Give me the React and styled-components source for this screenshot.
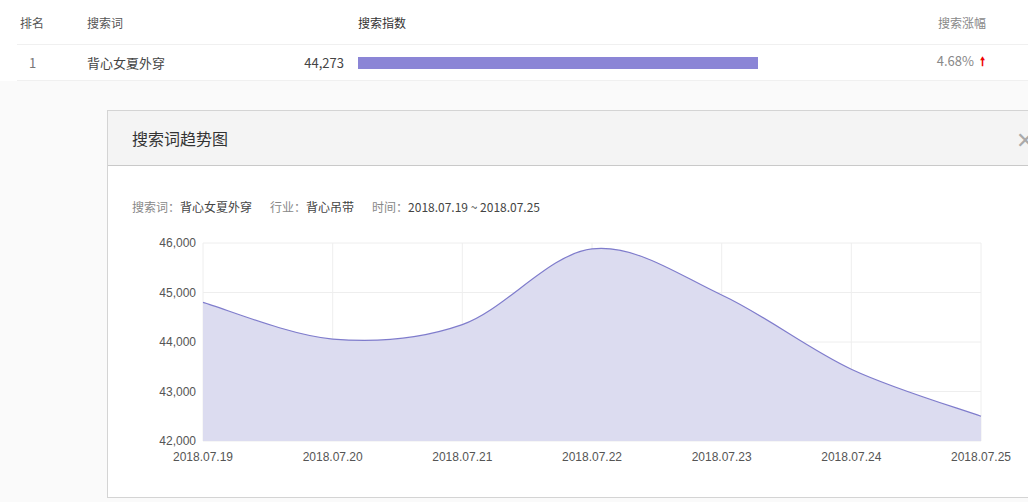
import React from 'react';
import styled, { createGlobalStyle } from 'styled-components';

const Global = createGlobalStyle`
  *, *::before, *::after { box-sizing: border-box; }
  html, body { margin: 0; background: #fafafa; overflow: hidden; }
  body { font-family: "Microsoft YaHei", "Noto Sans CJK SC", "Liberation Sans", sans-serif; }
`;

const Table = styled.div`
  background: #fff;
  padding: 0 0 0 17px;
`;

const Row = styled.div`
  display: flex;
  align-items: center;
  height: ${p => p.$h}px;
  border-bottom: 1px solid #f0f0f0;
  font-size: ${p => (p.$head ? 12 : 13)}px;
  color: ${p => (p.$head ? '#555' : '#444')};
`;

const Cell = styled.div`
  width: ${p => p.$w}px;
  flex: none;
  text-align: ${p => p.$align || 'left'};
  color: ${p => p.$color || 'inherit'};
  padding-left: ${p => p.$pl || 0}px;
`;

const Bar = styled.div`
  width: 400px;
  height: 12px;
  background: #8b85d6;
  margin-left: 14px;
`;

const Up = styled.span`
  color: #e00;
  font-weight: bold;
  margin-left: 6px;
  font-size: 12px;
`;

const Modal = styled.div`
  margin: 29px 0 0 107px;
  border: 1px solid #d4d4d4;
  border-right: none;
  background: #fff;
  height: 388px;
`;

const ModalHead = styled.div`
  height: 55px;
  background: #f4f4f4;
  border-bottom: 1px solid #c9c9c9;
  display: flex;
  align-items: center;
  justify-content: space-between;
  padding-left: 24px;
  font-size: 16px;
  color: #333;
`;

const Close = styled.span`
  color: #aaa;
  font-size: 22px;
  font-weight: 300;
  margin-right: -6px;
`;

const Meta = styled.div`
  padding: 32px 0 0 24px;
  font-size: 12px;
  color: #888;
  display: flex;
  gap: 18px;
  b { font-weight: normal; color: #444; }
`;

const ChartWrap = styled.div`
  margin-top: 12px;
`;

const xs = [202, 331.7, 461.3, 591, 720.7, 850.3, 980];
const vals = [44800, 44060, 44350, 45880, 44950, 43450, 42500];
const yOf = v => 246 + (46000 - v) * 0.0495;
const dates = ['2018.07.19', '2018.07.20', '2018.07.21', '2018.07.22', '2018.07.23', '2018.07.24', '2018.07.25'];

function smooth(pts) {
  let d = `M${pts[0][0]},${pts[0][1]}`;
  for (let i = 0; i < pts.length - 1; i++) {
    const p0 = pts[i - 1] || pts[i], p1 = pts[i], p2 = pts[i + 1], p3 = pts[i + 2] || p2;
    const c1 = [p1[0] + (p2[0] - p0[0]) / 6, p1[1] + (p2[1] - p0[1]) / 6];
    const c2 = [p2[0] - (p3[0] - p1[0]) / 6, p2[1] - (p3[1] - p1[1]) / 6];
    d += ` C${c1[0]},${c1[1]} ${c2[0]},${c2[1]} ${p2[0]},${p2[1]}`;
  }
  return d;
}

function Chart() {
  const pts = xs.map((x, i) => [x, yOf(vals[i])]);
  const line = smooth(pts);
  return (
    <svg width="921" height="240" viewBox="107 230 921 240" style={{ display: 'block' }}>
      {[42000, 43000, 44000, 45000, 46000].map(v => (
        <g key={v}>
          <line x1="202" x2="980" y1={yOf(v)} y2={yOf(v)} stroke="#eee" />
          <text x="195" y={yOf(v) + 4} fontSize="12" fill="#555" textAnchor="end" fontFamily="Liberation Sans, sans-serif">{v.toLocaleString('en-US')}</text>
        </g>
      ))}
      {xs.map((x, i) => (
        <g key={x}>
          <line x1={x} x2={x} y1="246" y2="444" stroke="#eee" />
          <text x={x} y="464" fontSize="12" fill="#555" textAnchor="middle" fontFamily="Liberation Sans, sans-serif">{dates[i]}</text>
        </g>
      ))}
      <path d={`${line} L980,444 L202,444 Z`} fill="#dcdcf0" />
      <path d={line} fill="none" stroke="#7f7ccc" strokeWidth="1.2" />
    </svg>
  );
}

export default function App() {
  return (
    <>
      <Global />
      <Table>
        <Row $h={45} $head>
          <Cell $w={70} $pl={3}>排名</Cell>
          <Cell $w={270}>搜索词</Cell>
          <Cell $w={562} $pl={1} $color="#333">搜索指数</Cell>
          <Cell $w={67} $align="right" $color="#888">搜索涨幅</Cell>
        </Row>
        <Row $h={36}>
          <Cell $w={70} $pl={12} $color="#777">1</Cell>
          <Cell $w={196}>背心女夏外穿</Cell>
          <Cell $w={61} $align="right">44,273</Cell>
          <Bar />
          <Cell $w={227} $align="right" $color="#888">4.68%<Up>🠕</Up></Cell>
        </Row>
      </Table>
      <Modal>
        <ModalHead>搜索词趋势图<Close>✕</Close></ModalHead>
        <Meta>
          <span>搜索词：<b>背心女夏外穿</b></span>
          <span>行业：<b>背心吊带</b></span>
          <span>时间：<b>2018.07.19 ~ 2018.07.25</b></span>
        </Meta>
        <ChartWrap><Chart /></ChartWrap>
      </Modal>
    </>
  );
}
